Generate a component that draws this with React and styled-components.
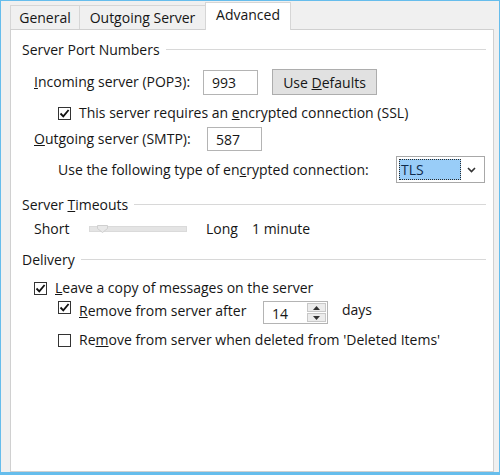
import React from "react";
import styled, { createGlobalStyle } from "styled-components";

const GlobalStyle = createGlobalStyle`
  html, body {
    margin: 0;
    padding: 0;
    background: #f0f0f0;
  }
  body {
    font-family: "Open Sans", "Noto Sans", "Liberation Sans", sans-serif;
    font-size: 14px;
    color: #161616;
  }
`;

const Window = styled.div`
  width: 500px;
  height: 475px;
  box-sizing: border-box;
  border: 1px solid #66bdec;
  border-bottom-width: 3px;
  background: #f0f0f0;
  padding: 0 5px 0 9px;
  display: flex;
  flex-direction: column;
`;

const TabRow = styled.div`
  display: flex;
  align-items: flex-end;
  height: 28px;
  flex-shrink: 0;
`;

const Tab = styled.div`
  position: relative;
  box-sizing: border-box;
  width: ${(p) => p.$w}px;
  height: ${(p) => (p.$active ? 28 : 24)}px;
  margin-left: ${(p) => (p.$first ? 0 : -1)}px;
  margin-bottom: ${(p) => (p.$active ? -1 : 0)}px;
  border: 1px solid #d6d6d6;
  border-bottom: none;
  background: ${(p) => (p.$active ? "#ffffff" : "#f0f0f0")};
  z-index: ${(p) => (p.$active ? 1 : 0)};
  display: flex;
  align-items: center;
  justify-content: center;
  padding-bottom: ${(p) => (p.$active ? 4 : 0)}px;
`;

const Panel = styled.div`
  flex: 1;
  box-sizing: border-box;
  background: #ffffff;
  border: 1px solid #d0d0d0;
  padding: 10px 7px 0 11px;
  display: flex;
  flex-direction: column;
`;

const Section = styled.div`
  display: flex;
  align-items: center;
  height: 18px;
  margin-top: ${(p) => p.$gap || 0}px;
`;

const Rule = styled.div`
  flex: 1;
  height: 1px;
  background: #d8d8d8;
  margin-left: 6px;
`;

const Row = styled.div`
  display: flex;
  align-items: ${(p) => p.$align || "center"};
  height: ${(p) => p.$h}px;
  margin-top: ${(p) => p.$gap}px;
  padding-left: ${(p) => p.$indent}px;
`;

const Label = styled.span`
  width: ${(p) => (p.$w ? `${p.$w}px` : "auto")};
  flex-shrink: 0;
  white-space: nowrap;
  line-height: 18px;
  margin-top: ${(p) => p.$top || 0}px;
  margin-left: ${(p) => p.$left || 0}px;
`;

const TextBox = styled.div`
  box-sizing: border-box;
  width: ${(p) => p.$w}px;
  height: ${(p) => p.$h}px;
  border: 1px solid #b4b4b4;
  background: #fff;
  padding-left: 8px;
  display: flex;
  align-items: center;
`;

const Button = styled.div`
  box-sizing: border-box;
  width: 105px;
  height: 26px;
  margin-left: 14px;
  background: #e1e1e1;
  border: 1px solid #adadad;
  display: flex;
  align-items: center;
  justify-content: center;
`;

const Box = styled.span`
  box-sizing: border-box;
  width: 13px;
  height: 13px;
  flex-shrink: 0;
  border: 1px solid #333;
  background: #fff;
  margin-right: 8px;
  margin-top: ${(p) => p.$top || 0}px;
  display: flex;
  align-items: center;
  justify-content: center;
`;

const Combo = styled.div`
  box-sizing: border-box;
  width: 89px;
  height: 27px;
  border: 1px solid #a8a8a8;
  background: #fff;
  padding: 2px;
  display: flex;
`;

const Selected = styled.div`
  flex: 1;
  background: #99cdf8;
  border: 1px dotted #2a2a2a;
  display: flex;
  align-items: center;
  padding-left: 1px;
  color: #0f2a4a;
`;

const Drop = styled.div`
  width: 21px;
  display: flex;
  align-items: center;
  justify-content: center;
`;

const Track = styled.div`
  position: relative;
  width: 96px;
  height: 4px;
  margin-right: 19px;
  background: #e4e4e4;
  border: 1px solid #dadada;
`;

const Thumb = styled.svg`
  position: absolute;
  left: 7px;
  top: -2px;
`;

const Spinner = styled.div`
  box-sizing: border-box;
  width: 65px;
  height: 23px;
  border: 1px solid #b4b4b4;
  background: #fff;
  display: flex;
`;

const SpinValue = styled.div`
  flex: 1;
  display: flex;
  align-items: center;
  padding-left: 8px;
  padding-top: 2px;
`;

const SpinButtons = styled.div`
  width: 19px;
  margin: 1px;
  display: flex;
  flex-direction: column;
  gap: 1px;
`;

const SpinButton = styled.div`
  flex: 1;
  background: #ececec;
  border: 1px solid #c8c8c8;
  display: flex;
  align-items: center;
  justify-content: center;
`;

const Check = () => (
  <svg width="11" height="11" viewBox="0 0 11 11">
    <path d="M1.5 5.5 L4.3 8.4 L9.6 2" fill="none" stroke="#111" strokeWidth="1.8" />
  </svg>
);

const CheckBox = ({ checked, top }) => <Box $top={top}>{checked && <Check />}</Box>;

const Arrow = ({ up }) => (
  <svg width="7" height="4" viewBox="0 0 7 4">
    <path d={up ? "M0 4 L3.5 0 L7 4 Z" : "M0 0 L3.5 4 L7 0 Z"} fill="#333" />
  </svg>
);

export default function App() {
  return (
    <>
      <GlobalStyle />
      <Window>
        <TabRow>
          <Tab $w={70} $first>General</Tab>
          <Tab $w={127}>Outgoing Server</Tab>
          <Tab $w={86} $active>Advanced</Tab>
        </TabRow>
        <Panel>
          <Section>
            <span>Server Port Numbers</span>
            <Rule />
          </Section>

          <Row $h={26} $gap={11} $indent={12}>
            <Label $w={169}>
              <u>I</u>ncoming server (POP3):
            </Label>
            <TextBox $w={55} $h={25}>993</TextBox>
            <Button>
              <span>
                Use <u>D</u>efaults
              </span>
            </Button>
          </Row>

          <Row $h={18} $gap={9} $indent={36}>
            <CheckBox checked />
            <Label>
              This server requires an <u>e</u>ncrypted connection (SSL)
            </Label>
          </Row>

          <Row $h={24} $gap={5} $indent={12}>
            <Label $w={173}>
              <u>O</u>utgoing server (SMTP):
            </Label>
            <TextBox $w={55} $h={24}>587</TextBox>
          </Row>

          <Row $h={27} $gap={5} $indent={36}>
            <Label $w={338}>
              Use the following type of en<u>c</u>rypted connection:
            </Label>
            <Combo>
              <Selected>TLS</Selected>
              <Drop>
                <svg width="9" height="6" viewBox="0 0 9 6">
                  <path d="M1 1 L4.5 4.5 L8 1" fill="none" stroke="#333" strokeWidth="1.6" />
                </svg>
              </Drop>
            </Combo>
          </Row>

          <Section $gap={12}>
            <span>
              Server <u>T</u>imeouts
            </span>
            <Rule />
          </Section>

          <Row $h={18} $gap={7} $indent={12}>
            <Label $w={55}>Short</Label>
            <Track>
              <Thumb width="11" height="8" viewBox="0 0 11 8">
                <path d="M0.5 0.5 H10.5 V3.5 L5.5 7.5 L0.5 3.5 Z" fill="#e8e8e8" stroke="#cfcfcf" />
              </Thumb>
            </Track>
            <Label $w={46}>Long</Label>
            <Label>1 minute</Label>
          </Row>

          <Section $gap={12}>
            <span>Delivery</span>
            <Rule />
          </Section>

          <Row $h={18} $gap={11} $indent={12}>
            <CheckBox checked />
            <Label>
              <u>L</u>eave a copy of messages on the server
            </Label>
          </Row>

          <Row $h={23} $gap={4} $indent={36} $align="flex-start">
            <CheckBox checked top={0} />
            <Label $w={184} $top={1}>
              <u>R</u>emove from server after
            </Label>
            <Spinner>
              <SpinValue>14</SpinValue>
              <SpinButtons>
                <SpinButton>
                  <Arrow up />
                </SpinButton>
                <SpinButton>
                  <Arrow />
                </SpinButton>
              </SpinButtons>
            </Spinner>
            <Label $left={14}>days</Label>
          </Row>

          <Row $h={18} $gap={7} $indent={36}>
            <CheckBox />
            <Label>
              Re<u>m</u>ove from server when deleted from 'Deleted Items'
            </Label>
          </Row>
        </Panel>
      </Window>
    </>
  );
}
